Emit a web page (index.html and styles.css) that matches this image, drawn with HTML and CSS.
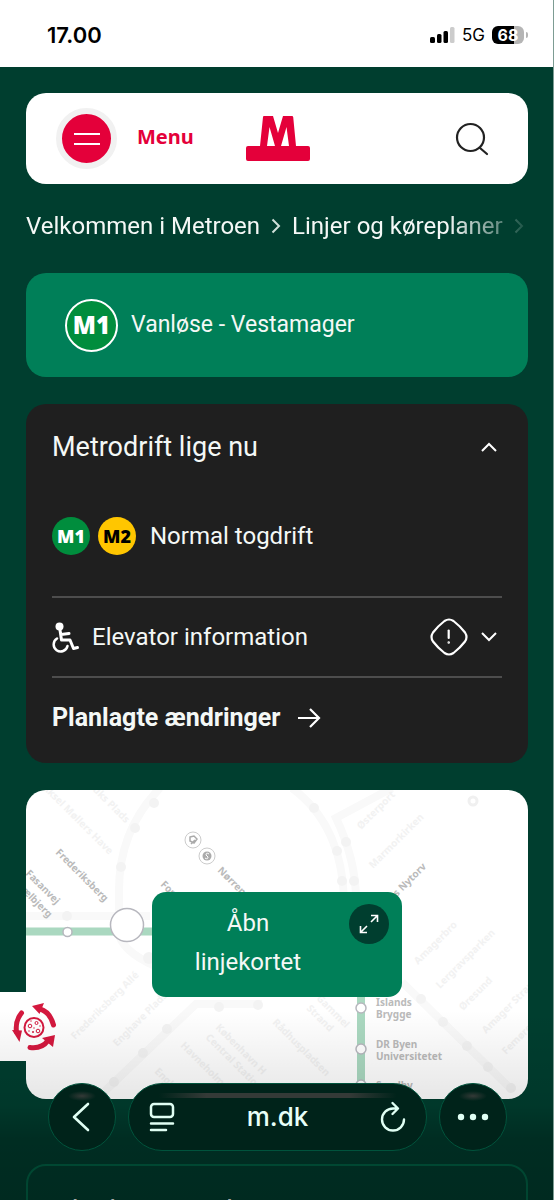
FILE: index.html
```html
<!DOCTYPE html>
<html lang="da">
<head>
<meta charset="utf-8">
<meta name="viewport" content="width=device-width, initial-scale=1">
<title>M1 Vanløse - Vestamager</title>
<link rel="stylesheet" href="styles.css">
</head>
<body>
<div class="screen">
  <div class="status">
    <span class="clock">17.00</span>
    <span class="indicators">
      <svg class="signal" width="25" height="16" viewBox="0 0 25 16"><g fill="#000"><rect x="0" y="10" width="5" height="6" rx="1.5"/><rect x="7" y="7" width="4.500" height="9" rx="1.500"/><rect x="13.500" y="4" width="4.500" height="12" rx="1.500"/></g><rect x="20" y="0" width="4.500" height="16" rx="1.500" fill="#ccc"/></svg>
      <span class="network">5G</span>
      <span class="battery">68</span>
    </span>
  </div>

  <main class="page">
    <header class="topbar">
      <button class="menu" type="button">
        <span class="menu-disc"><svg width="28" height="14" viewBox="0 0 28 14" stroke="#fff" stroke-width="2"><path d="M1 2H27M1 12H27"/></svg></span>
        <span>Menu</span>
      </button>
      <a class="logo" href="#" aria-label="Metro"><svg width="64" height="46" viewBox="0 0 64 46" fill="#e4003a"><path d="M17 1Q17 0 18 0H27L32 17L37 0H46Q47 0 47.200 1L50 30H62Q64 30 64 32V43Q64 45 62 45H2Q0 45 0 43V32Q0 30 2 30H14ZM23.500 11L21 30H29ZM40.500 11L35 30H43Z"/></svg></a>
      <button class="search" type="button" aria-label="Søg"><svg width="34" height="34" viewBox="0 0 34 34" fill="none" stroke="#222" stroke-width="2.200" stroke-linecap="round"><circle cx="15.500" cy="15.500" r="13.500"/><path d="M25 26L32 32"/></svg></button>
    </header>

    <nav class="crumbs" aria-label="Brødkrumme">
      <a href="#">Velkommen i Metroen</a>
      <svg width="10" height="16" viewBox="0 0 10 16"><path d="M1.500 1.500L8 8L1.500 14.500"/></svg>
      <a href="#">Linjer og køreplaner</a>
      <svg width="10" height="16" viewBox="0 0 10 16"><path d="M1.500 1.500L8 8L1.500 14.500"/></svg>
    </nav>

    <section class="line">
      <span class="badge badge-line">M1</span>
      <h1>Vanløse - Vestamager</h1>
    </section>

    <section class="status-card">
      <button class="card-title" type="button"><span>Metrodrift lige nu</span><svg class="chev" width="18" height="12" viewBox="0 0 18 12"><path d="M2 10L9 3L16 10"/></svg></button>
      <div class="service"><span class="badge m1">M1</span><span class="badge m2">M2</span><span class="service-text">Normal togdrift</span></div>
      <button class="elevator" type="button">
        <svg width="28" height="31" viewBox="0 0 28 31" fill="none" stroke="#fff" stroke-width="3" stroke-linecap="round" stroke-linejoin="round"><circle cx="7.500" cy="4.500" r="4" fill="#fff" stroke="none"/><path d="M8 8L9.500 18H18L21.500 26.500L25.500 25.500M9 12.500L17 11.500"/><path d="M5 16.500A7 7 0 1 0 15.500 24" stroke-width="2.500"/></svg>
        <span class="grow">Elevator information</span>
        <svg width="38" height="38" viewBox="0 0 38 38" fill="none" stroke="#fff" stroke-width="2.200" stroke-linecap="round"><path d="M14.500 3Q19 0 23.500 3Q30 8 35 14.500Q38 19 35 23.500Q30 30 23.500 35Q19 38 14.500 35Q8 30 3 23.500Q0 19 3 14.500Q8 8 14.500 3Z"/><path d="M18.700 12.500V20"/><circle cx="18.700" cy="24.500" r=".5" stroke-width="1.500"/></svg>
        <svg class="chev" width="18" height="12" viewBox="0 0 18 12"><path d="M2 2L9 9L16 2"/></svg>
      </button>
      <a class="planned" href="#"><span>Planlagte ændringer</span><svg width="24" height="22" viewBox="0 0 24 22" fill="none" stroke="#fff" stroke-width="2.200"><path d="M1 11H22M13 2L22 11L13 20"/></svg></a>
    </section>

    <section class="map">
      <svg class="map-art" viewBox="26 790 502 309" preserveAspectRatio="xMidYMid slice" aria-hidden="true">
        <g fill="none" stroke="#f9f9f9" stroke-width="8">
          <path d="M160 788Q119 830 119 890V935Q125 955 165 970M26 916H150M292 788Q342 825 344 900M392 788L336 818Q356 860 356 900M104 1092L196 1004H262M402 982L512 1090"/>
        </g>
        <g fill="#f3f3f3">
          <circle cx="154" cy="803" r="5"/><circle cx="135" cy="828" r="5"/><circle cx="121" cy="867" r="5"/><circle cx="67" cy="916" r="5"/><circle cx="149" cy="958" r="6"/>
          <circle cx="314" cy="808" r="5"/><circle cx="346" cy="842" r="5"/><circle cx="337" cy="851" r="5"/><circle cx="342" cy="881" r="5"/><circle cx="354" cy="881" r="5"/>
          <circle cx="167" cy="1029" r="5"/><circle cx="143" cy="1053" r="5"/><circle cx="114" cy="1082" r="5"/><circle cx="219" cy="1007" r="5"/><circle cx="258" cy="1005" r="5"/>
          <circle cx="421" cy="999" r="5"/><circle cx="443" cy="1022" r="5"/><circle cx="467" cy="1046" r="5"/><circle cx="488" cy="1067" r="5"/><circle cx="511" cy="1088" r="5"/>
        </g>
        <circle cx="473" cy="801" r="4" fill="#fff" stroke="#f0f0f0" stroke-width="3"/>
        <g class="faint">
          <text transform="translate(42 788) rotate(45)">Aksel Møllers Have</text>
          <text transform="translate(82 780) rotate(45)">Nuuks Plads</text>
          <text transform="translate(361 830) rotate(-45)">Østerport</text>
          <text transform="translate(373 869) rotate(-45)">Marmorkirken</text>
          <text transform="translate(418 965) rotate(-45)">Amagerbro</text>
          <text transform="translate(440 989) rotate(-45)">Lergravsparken</text>
          <text transform="translate(463 1011) rotate(-45)">Øresund</text>
          <text transform="translate(486 1034) rotate(-45)">Amager Strand</text>
          <text transform="translate(506 1055) rotate(-45)">Femøren</text>
          <text transform="translate(75 1040) rotate(-45)">Frederiksberg Allé</text>
          <text transform="translate(117 1047) rotate(-45)">Enghave Plads</text>
          <text transform="translate(180 1046) rotate(45)">Havneholmen</text>
          <text transform="translate(154 1072) rotate(45)">Enghave</text>
          <text transform="translate(215 1028) rotate(45)"><tspan>København H</tspan><tspan x="0" dy="14">Central Station</tspan></text>
          <text transform="translate(272 1023) rotate(45)">Rådhuspladsen</text>
          <text transform="translate(316 999) rotate(45)"><tspan>Gammel</tspan><tspan x="0" dy="14">Strand</tspan></text>
        </g>
        <path d="M26 931.500H152M361 990V1099" stroke="#aad8c0" stroke-width="8" fill="none"/>
        <g fill="#fff" stroke="#b7b7be" stroke-width="1.500"><circle cx="67.500" cy="932" r="4.500"/><circle cx="127" cy="925" r="16.500"/><circle cx="361" cy="1008" r="5"/><circle cx="361" cy="1049" r="5"/><circle cx="361" cy="1085" r="5"/></g>
        <g fill="#fff" stroke="#ccc"><circle cx="193" cy="840" r="8"/><circle cx="207" cy="856" r="8"/></g>
        <path d="M190 837L194 836L197 839L194 843L190 841ZM191 844L195 840" fill="none" stroke="#aaa" stroke-width="1.500"/>
        <circle cx="207" cy="856" r="4.500" fill="#aaa"/><path d="M209 854Q206 852 206 855L208 857Q208 860 205 858" fill="none" stroke="#fff"/>
        <g class="station">
          <text transform="translate(55 853) rotate(45)">Frederiksberg</text>
          <text transform="translate(25 874) rotate(45)">Fasanvej</text>
          <text transform="translate(-2 868) rotate(45)">Lindevælbjerg</text>
          <text transform="translate(160 885) rotate(45)">Forum</text>
          <text transform="translate(217 871) rotate(45)">Nørreport</text>
          <text transform="translate(370 924) rotate(-45)">Kongens Nytorv</text>
          <text x="376" y="1006">Islands</text><text x="376" y="1018">Brygge</text>
          <text x="376" y="1048">DR Byen</text><text x="376" y="1060">Universitetet</text>
          <text x="376" y="1089">Sundby</text>
        </g>
      </svg>
      <button class="open-map" type="button"><span class="open-label">Åbn linjekortet</span><span class="expand"><svg width="20" height="20" viewBox="0 0 20 20" fill="none" stroke="#fff" stroke-width="1.600"><path d="M12 8L18.500 1.500M12 1.500H18.500V8M8 12L1.500 18.500M1.500 12V18.500H8"/></svg></span></button>
    </section>

    <section class="next-card"><h2>Planlagte ændringer</h2></section>
  </main>

  <button class="cookie" type="button" aria-label="Cookieindstillinger"><svg width="46" height="48" viewBox="0 0 46 48"><g fill="none" stroke="#d4183e" stroke-width="5" stroke-linecap="round"><path d="M9.500 10Q3 18 4.500 29"/><path d="M41.500 22Q38 9 28 6"/><path d="M18 44.500Q30 46 36 37.500"/></g><g fill="#d4183e"><path d="M0 27L10 27.500L7.500 39Z"/><path d="M20 3L32 0L27.500 11Z"/><path d="M30 35L43 32L41 44Z"/></g><g fill="none" stroke="#d4183e"><circle cx="22" cy="24.500" r="9.500" stroke-width="2"/><circle cx="18" cy="23" r="1.800"/><circle cx="24.500" cy="20" r="1.500"/><circle cx="26" cy="28" r="1.800"/></g><g fill="#d4183e"><circle cx="21" cy="29" r="1"/><circle cx="17" cy="28" r=".7"/><circle cx="28" cy="23" r=".7"/><circle cx="19" cy="18" r=".7"/><circle cx="22" cy="25" r=".7"/></g></svg></button>
  <div class="shade"></div>
  <nav class="browser" aria-label="Browser">
    <button class="glass round" type="button" aria-label="Tilbage"><svg width="20" height="32" viewBox="0 0 20 32" fill="none" stroke="#e0fff4" stroke-width="2.600" stroke-linecap="round" stroke-linejoin="round"><path d="M16 3L2 16L16 29"/></svg></button>
    <div class="glass address">
      <button type="button" aria-label="Sidemenu"><svg width="26" height="30" viewBox="0 0 26 30" fill="none" stroke="#e0fff4" stroke-width="2.500" stroke-linecap="round"><rect x="2" y="2" width="22" height="13" rx="3"/><path d="M2 21.500H24M2 28H17"/></svg></button>
      <span class="domain">m.dk</span>
      <button type="button" aria-label="Genindlæs"><svg width="26" height="32" viewBox="0 0 26 32" fill="none" stroke="#e0fff4" stroke-width="2.400" stroke-linecap="round" stroke-linejoin="round"><path d="M17 7.500H13A11 11 0 1 0 24 18.500M12.500 2L18 7.500L12.500 13"/></svg></button>
    </div>
    <button class="glass round" type="button" aria-label="Mere"><svg width="32" height="8" viewBox="0 0 32 8" fill="#e0fff4"><circle cx="4" cy="4" r="3.200"/><circle cx="16" cy="4" r="3.200"/><circle cx="28" cy="4" r="3.200"/></svg></button>
  </nav>
</div>
</body>
</html>
```
FILE: styles.css
```css
* { box-sizing: border-box; }
body { margin: 0; background: #003e2f; color: #f4f8f6; font: 400 24px/32px Roboto, "Liberation Sans", sans-serif; }
button { font: inherit; color: inherit; background: none; border: 0; padding: 0; margin: 0; text-align: left; }
a { color: inherit; text-decoration: none; }
h1, h2 { margin: 0; font: inherit; }
svg { display: block; flex: none; }

.screen { position: relative; height: 100vh; overflow: hidden; border-right: 1px solid #7d9c93; }
.status { height: 67px; background: #fff; color: #000; display: flex; align-items: center; justify-content: space-between; padding: 3px 30px 0 47px; margin-right: -1px; }
.clock { font: 600 22px/28px Inter, sans-serif; }
.indicators { display: flex; align-items: center; gap: 7px; }
.network { font: 400 17px/20px Inter, sans-serif; }
.battery { position: relative; width: 32px; height: 18px; border-radius: 6px; background: linear-gradient(90deg, #000 68%, #b5b5b5 68%); color: #fff; font: 700 16px/18px Inter, sans-serif; text-align: center; }
.battery::after { content: ""; position: absolute; right: -4px; top: 6px; width: 2px; height: 6px; border-radius: 0 2px 2px 0; background: #b5b5b5; }

.page { padding: 26px 25px 0 26px; display: flex; flex-direction: column; }
.topbar { height: 91px; border-radius: 20px; background: #fff; display: grid; grid-template-columns: 1fr auto 1fr; align-items: center; padding: 0 39px 0 30px; }
.menu { display: flex; align-items: center; gap: 20px; color: #e4003a; font: 700 20px/28px "Noto Sans", sans-serif; }
.menu > span:last-child { margin-bottom: 4px; }
.menu-disc { width: 61px; height: 61px; border: 6px solid #f1f1f1; border-radius: 50%; background: #e4003a; display: grid; place-items: center; }
.logo { padding-left: 10px; }
.search { justify-self: end; }

.crumbs { height: 89px; display: flex; align-items: center; gap: 11px; padding-bottom: 5px; white-space: nowrap; -webkit-mask-image: linear-gradient(90deg, #000 84%, transparent 102%); mask-image: linear-gradient(90deg, #000 84%, transparent 102%); }
.crumbs svg { fill: none; stroke: #cfe0da; stroke-width: 2; }

.badge { display: grid; place-items: center; border-radius: 50%; font-family: "Noto Sans", sans-serif; font-weight: 900; }
.line { height: 104px; border-radius: 20px; background: #007f58; display: flex; align-items: center; gap: 13px; padding: 0 39px; }
.line h1 { font-size: 23px; }
.badge-line { width: 53px; height: 53px; border: 2px solid #fff; background: #008d3d; color: #fff; font-size: 24px; }

.status-card { margin-top: 27px; border-radius: 20px; background: #1f1f1f; padding: 26px 26px 0; }
.status-card button { width: 100%; display: flex; align-items: center; }
.chev { fill: none; stroke: #fff; stroke-width: 2; margin-right: 4px; }
.card-title { justify-content: space-between; font-size: 27px; line-height: 34px; }
.service { height: 134px; padding-top: 12px; display: flex; align-items: center; gap: 8px; border-bottom: 2px solid #4d4d4d; }
.service .badge { width: 38px; height: 38px; font-size: 18px; }
.m1 { background: #008d3d; color: #fff; }
.m2 { background: #ffc600; color: #000; }
.service-text { margin-left: 6px; }
.status-card .elevator { height: 80px; border-bottom: 2px solid #4d4d4d; gap: 12px; }
.grow { flex: 1; }
.planned { display: flex; align-items: center; gap: 16px; height: 85px; padding-bottom: 6px; font-size: 25px; font-weight: 700; }

.map { position: relative; height: 309px; margin-top: 27px; border-radius: 20px; overflow: hidden; background: #fff; }
.map-art { width: 100%; height: 100%; font-family: "Noto Sans", sans-serif; font-size: 10px; font-weight: 700; }
.faint { fill: #f2f2f2; }
.station { fill: #bababa; }
.open-map { position: absolute; left: 50%; top: 102px; width: 250px; transform: translateX(-50%); border-radius: 14px; background: #007f58; display: flex; align-items: flex-start; padding: 12px 13px 15px 17px; line-height: 39px; text-align: center; }
.open-label { flex: 1; padding: 0 34px 0 12px; }
.expand { width: 40px; height: 40px; border-radius: 50%; background: #003e2f; display: grid; place-items: center; }

.next-card { margin-top: 65px; height: 120px; border: 2px solid #006547; border-radius: 20px; padding: 28px 26px; }
.next-card h2 { font-size: 28px; line-height: 34px; }

.cookie { position: absolute; left: 0; bottom: 139px; width: 60px; height: 69px; display: grid; place-items: center; padding-left: 9px; background: linear-gradient(90deg, #fff 45%, transparent 45%); }
.shade { position: absolute; left: 0; right: 0; bottom: 0; height: 190px; background: linear-gradient(transparent, rgba(0, 0, 0, .1) 50%, rgba(0, 0, 0, .28) 68%, rgba(0, 0, 0, .32)); pointer-events: none; }
.browser { position: absolute; left: 48px; right: 46px; bottom: 49px; display: flex; gap: 12px; }
.glass { height: 68px; border: 1px solid #00533c; border-radius: 34px; background: linear-gradient(90deg, transparent, #343a37 20%, #343a37 80%, transparent) center 9px / 80% 5px no-repeat, #00231a; color: #e8fff7; }
.round { width: 68px; flex: none; display: grid; place-items: center; background: radial-gradient(ellipse 14px 5px at 50% 12px, #343a37, transparent), #00231a; }
.address { flex: 1; display: flex; align-items: center; justify-content: space-between; padding: 0 20px; }
.domain { font: 500 26px/32px Inter, sans-serif; }
```
